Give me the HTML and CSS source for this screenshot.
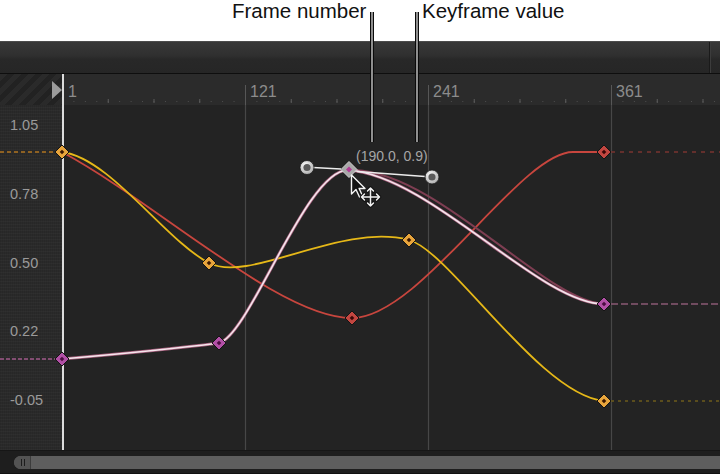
FILE: index.html
```html
<!DOCTYPE html>
<html>
<head>
<meta charset="utf-8">
<link rel="stylesheet" href="styles.css">
</head>
<body>
<div class="top">
  <span class="callout">Frame number</span>
  <span class="callout callout-value">Keyframe value</span>
</div>
<div class="panel">
  <div class="header"><div class="header-main"></div><div class="header-end"></div></div>
  <div class="ruler">
    <div class="ruler-corner"><span class="playhead-tri"></span></div>
    <div class="ruler-track">
      <div class="seg seg-first">1</div>
      <div class="seg">121</div>
      <div class="seg">241</div>
      <div class="seg">361</div>
    </div>
  </div>
  <div class="graph">
    <div class="ylabels">
      <span>1.05</span><span>0.78</span><span>0.50</span><span>0.22</span><span>-0.05</span>
    </div>
    <svg class="plot" width="720" height="345" viewBox="0 105 720 345">
      <defs>
        <radialGradient id="hg" cx="0.4" cy="0.35" r="0.7">
          <stop offset="0" stop-color="#ffffff"/>
          <stop offset="1" stop-color="#a8a8a8"/>
        </radialGradient>
      </defs>
      <line class="grid" x1="245.5" y1="105" x2="245.5" y2="450"/>
      <line class="grid" x1="428.5" y1="105" x2="428.5" y2="450"/>
      <line class="grid" x1="611.5" y1="105" x2="611.5" y2="450"/>
      <line class="playhead" x1="63" y1="105" x2="63" y2="450"/>

      <line class="ext ext-o" x1="0" y1="152" x2="55" y2="152"/>
      <line class="ext ext-p" x1="0" y1="359" x2="55" y2="359"/>
      <line class="ext ext-r" x1="611" y1="152" x2="720" y2="152"/>
      <line class="ext ext-p2" x1="611" y1="304" x2="720" y2="304"/>
      <line class="ext ext-y" x1="611" y1="401" x2="720" y2="401"/>

      <path class="c-red" d="M62,152 C160,205 280,318 352,318 C420,318 520,152 573,152 L604,152"/>
      <path class="c-yel" d="M62,152 C110,158 165,240 209,263 C250,284 340,222 409,240 C450,251 540,395 604,401"/>
      <path class="c-maroon" d="M355,170 C440,174 545,301 604,304"/>
      <path class="c-pink-u" d="M62,359 C120,354 180,348 219,343 C250,335 307,167 349,170 C432,177 540,304 604,304"/>
      <path class="c-pink" d="M62,359 C120,354 180,348 219,343 C250,335 307,167 349,170 C432,177 540,304 604,304"/>

      <g class="kf kf-o" transform="translate(62 152)"><path class="d-out" d="M0-7 7 0 0 7-7 0Z"/><path class="d-in" d="M0-2.3 2.3 0 0 2.3-2.3 0Z"/></g>
      <g class="kf kf-o" transform="translate(209 263)"><path class="d-out" d="M0-7 7 0 0 7-7 0Z"/><path class="d-in" d="M0-2.3 2.3 0 0 2.3-2.3 0Z"/></g>
      <g class="kf kf-o" transform="translate(409 240)"><path class="d-out" d="M0-7 7 0 0 7-7 0Z"/><path class="d-in" d="M0-2.3 2.3 0 0 2.3-2.3 0Z"/></g>
      <g class="kf kf-o" transform="translate(604 401)"><path class="d-out" d="M0-7 7 0 0 7-7 0Z"/><path class="d-in" d="M0-2.3 2.3 0 0 2.3-2.3 0Z"/></g>
      <g class="kf kf-r" transform="translate(352 318)"><path class="d-out" d="M0-7 7 0 0 7-7 0Z"/><path class="d-in" d="M0-2.3 2.3 0 0 2.3-2.3 0Z"/></g>
      <g class="kf kf-r" transform="translate(604 152)"><path class="d-out" d="M0-7 7 0 0 7-7 0Z"/><path class="d-in" d="M0-2.3 2.3 0 0 2.3-2.3 0Z"/></g>
      <g class="kf kf-p" transform="translate(62 359)"><path class="d-out" d="M0-7 7 0 0 7-7 0Z"/><path class="d-in" d="M0-2.3 2.3 0 0 2.3-2.3 0Z"/></g>
      <g class="kf kf-p" transform="translate(219 343)"><path class="d-out" d="M0-7 7 0 0 7-7 0Z"/><path class="d-in" d="M0-2.3 2.3 0 0 2.3-2.3 0Z"/></g>
      <g class="kf kf-p" transform="translate(604 304)"><path class="d-out" d="M0-7 7 0 0 7-7 0Z"/><path class="d-in" d="M0-2.3 2.3 0 0 2.3-2.3 0Z"/></g>

      <line class="handle-line" x1="313" y1="167.5" x2="341" y2="169"/>
      <line class="handle-line" x1="357" y1="171.5" x2="425" y2="176.5"/>
      <g transform="translate(307 167.5)"><circle class="h-out" r="7"/><circle class="h-in" r="3.6"/></g>
      <g transform="translate(432 177)"><circle class="h-out" r="7"/><circle class="h-in" r="3.6"/></g>
      <g transform="translate(349 169.5)"><path class="sel-out" d="M0-8 8 0 0 8-8 0Z"/><path class="sel-in" d="M0-3 3 0 0 3-3 0Z"/></g>

      <text class="tip" x="356" y="161">(190.0, 0.9)</text>

      <path class="cursor-arrow" transform="translate(351.5 175)" d="M0,0 L0,19 L4.5,14.5 L8,22 L11,20.8 L7.6,13.5 L13.5,13.5 Z"/>
      <g class="move" transform="translate(370.5 197)">
        <path class="move-out" d="M-9,0 L9,0 M0,-9 L0,9 M-9,0 L-6,-3 M-9,0 L-6,3 M9,0 L6,-3 M9,0 L6,3 M0,-9 L-3,-6 M0,-9 L3,-6 M0,9 L-3,6 M0,9 L3,6"/>
        <path class="move-in" d="M-9,0 L9,0 M0,-9 L0,9 M-9,0 L-6,-3 M-9,0 L-6,3 M9,0 L6,-3 M9,0 L6,3 M0,-9 L-3,-6 M0,-9 L3,-6 M0,9 L-3,6 M0,9 L3,6"/>
      </g>
    </svg>
  </div>
  <div class="scroll">
    <div class="scroll-bar">
      <div class="knob"><span class="grip"></span><span class="grip"></span></div>
    </div>
  </div>
</div>
<svg class="callout-lines" width="720" height="476" viewBox="0 0 720 476">
  <line class="cl-dark" x1="372" y1="12" x2="372" y2="142"/>
  <line class="cl-light" x1="372" y1="12" x2="372" y2="142"/>
  <line class="cl-dark" x1="417" y1="12" x2="417" y2="142"/>
  <line class="cl-light" x1="417" y1="12" x2="417" y2="142"/>
</svg>
</body>
</html>
```
FILE: styles.css
```css
* { box-sizing: border-box; }
html, body { margin: 0; padding: 0; }
body {
  width: 720px;
  height: 476px;
  background: #ffffff;
  font-family: "Liberation Sans", Arial, sans-serif;
  position: relative;
  overflow: hidden;
}
.top {
  height: 41px;
  display: flex;
  align-items: flex-start;
  padding: 1px 0 0 232px;
}
.callout {
  font-size: 20.5px;
  line-height: 20px;
  color: #111;
  white-space: nowrap;
}
.callout-value { margin-left: 55.6px; }

.panel {
  height: 433px;
  background: #232323;
  border-top: 1px solid #4c4c4c;
  display: flex;
  flex-direction: column;
}
.header {
  height: 32px;
  flex: none;
  display: flex;
  border-bottom: 1px solid #0e0e0e;
  background: linear-gradient(#383838, #2f2f2f 45%, #282828 55%, #262626);
}
.header-main { flex: 1; }
.header-end {
  width: 11px;
  border-left: 1px solid #1a1a1a;
  box-shadow: inset 1px 0 #3c3c3c;
}
.ruler {
  height: 31px;
  flex: none;
  display: flex;
  background: #2b2b2b;
}
.ruler-corner {
  flex: none;
  width: 62px;
  display: flex;
  align-items: center;
  justify-content: flex-end;
  background: repeating-linear-gradient(135deg, #2a2a2a 0 5px, #222222 5px 10px);
}
.playhead-tri {
  width: 0;
  height: 0;
  border-left: 10px solid #9c9c9c;
  border-top: 9.5px solid transparent;
  border-bottom: 9.5px solid transparent;
  margin-top: 1px;
}
.ruler-track {
  flex: 1;
  min-width: 0;
  overflow: hidden;
  display: flex;
  align-items: flex-end;
  border-left: 2px solid #dcdcdc;
  background-image:
    linear-gradient(90deg, #5c5c5c 1px, transparent 1px),
    linear-gradient(90deg, #4e4e4e 1px, transparent 1px);
  background-size: 45.75px 4px, 11.4375px 1px;
  background-position: -2px 25px, -2px 27px;
  background-repeat: repeat-x;
}
.seg {
  flex: none;
  width: 183px;
  height: 20px;
  border-left: 1px solid #575757;
  padding-left: 4px;
  font-size: 16px;
  line-height: 14px;
  color: #8c8c8c;
}
.seg-first {
  width: 181px;
  border-left: 0;
  padding-left: 4px;
}

.graph {
  height: 345px;
  flex: none;
  position: relative;
  display: flex;
}
.ylabels {
  width: 62px;
  display: flex;
  flex-direction: column;
  gap: 54.75px;
  padding: 13px 0 0 10px;
  font-size: 14.5px;
  line-height: 14px;
  color: #9a9a9a;
  background-color: #2a2a2a;
  background-image:
    repeating-linear-gradient(0deg, rgba(255,255,255,0.025) 0 1px, transparent 1px 3px),
    repeating-linear-gradient(90deg, rgba(0,0,0,0.08) 0 1px, transparent 1px 2px);
}
.plot {
  position: absolute;
  left: 0;
  top: 0;
}
.grid { stroke: #474747; stroke-width: 1.2; }
.playhead { stroke: #dcdcdc; stroke-width: 2; }
.ext { stroke-width: 1.5; fill: none; }
.ext-o { stroke: #b07420; stroke-dasharray: 4 3; }
.ext-p { stroke: #a05a8a; stroke-dasharray: 4 2; }
.ext-r { stroke: #7a3430; stroke-dasharray: 4 5; }
.ext-p2 { stroke: #8a5a74; stroke-dasharray: 7 3; }
.ext-y { stroke: #6e5c1c; stroke-dasharray: 3 4; }

.c-red { fill: none; stroke: #c8463e; stroke-width: 1.8; }
.c-yel { fill: none; stroke: #e6b818; stroke-width: 1.8; }
.c-maroon { fill: none; stroke: #7e3e52; stroke-width: 2; }
.c-pink-u { fill: none; stroke: #a8607e; stroke-width: 3; }
.c-pink { fill: none; stroke: #f4e6ec; stroke-width: 1.6; }

.d-out { stroke: #141414; stroke-width: 1; }
.kf-o .d-out { fill: #e8a53c; }
.kf-o .d-in { fill: #3a1600; }
.kf-r .d-out { fill: #c24640; }
.kf-r .d-in { fill: #3a0606; }
.kf-p .d-out { fill: #b250a6; }
.kf-p .d-in { fill: #4a0c40; }

.handle-line { stroke: #ececec; stroke-width: 1.6; }
.h-out { fill: url(#hg); stroke: #1a1a1a; stroke-width: 0.8; }
.h-in { fill: #5a5a5a; }
.sel-out { fill: #a9a9a9; stroke: #d4d4d4; stroke-width: 1; }
.sel-in { fill: #b03c94; }
.tip {
  font-family: "Liberation Sans", Arial, sans-serif;
  font-size: 14px;
  fill: #a6a6a6;
}
.cursor-arrow { fill: #111111; stroke: #f4f4f4; stroke-width: 1.4; stroke-linejoin: round; }
.move-out { fill: none; stroke: #111; stroke-width: 3.6; stroke-linecap: round; stroke-linejoin: round; }
.move-in { fill: none; stroke: #f2f2f2; stroke-width: 1.5; stroke-linecap: round; stroke-linejoin: round; }

.scroll {
  height: 24px;
  flex: none;
  background: #1e1e1e;
  border-top: 1px solid #161616;
  border-bottom: 1px solid #111;
  padding: 5px 0 0 14px;
}
.scroll-bar {
  height: 13px;
  background: #5e5e5e;
  border-radius: 7px 0 0 7px;
  display: flex;
}
.knob {
  width: 17px;
  background: #535353;
  border-radius: 7px 0 0 7px;
  border-right: 1px solid #3c3c3c;
  display: flex;
  justify-content: center;
  align-items: center;
  gap: 2px;
  padding-left: 2px;
}
.grip { width: 1px; height: 7px; background: #1c1c1c; }

.callout-lines {
  position: absolute;
  left: 0;
  top: 0;
  pointer-events: none;
}
.cl-dark { stroke: #0a0a0a; stroke-width: 4; }
.cl-light { stroke: #c8c8c8; stroke-width: 1.4; }
```
